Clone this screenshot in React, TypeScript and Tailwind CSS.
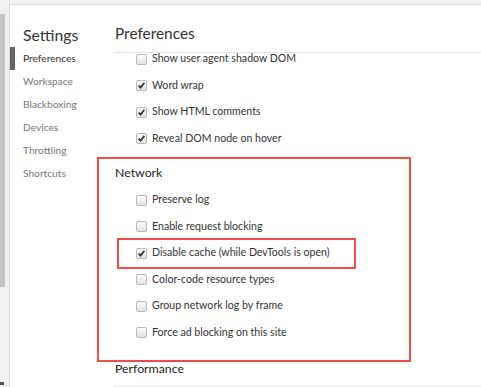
import React from "react";

const font = { fontFamily: 'Lato, "Open Sans", sans-serif' };

function Box({ checked }: { checked?: boolean }) {
  return (
    <span className="relative inline-block w-[11px] h-[11px] rounded-[2px] border border-[#b9b9b9] bg-gradient-to-b from-[#fbfbfb] to-[#e2e2e2] shrink-0">
      {checked && (
        <svg viewBox="0 0 11 11" className="absolute left-[-1px] top-[-1px] w-[11px] h-[11px]">
          <path d="M2.6 5.6 L4.6 7.6 L8.4 2.8" fill="none" stroke="#333" strokeWidth="1.7" />
        </svg>
      )}
    </span>
  );
}

function Row({ label, checked, children }: { label: string; checked?: boolean; children?: React.ReactNode }) {
  return (
    <div className="relative h-[26.5px] flex items-center pl-[21px] gap-[5px] text-[10.6px] text-[#333]">
      {children}
      <Box checked={checked} />
      <span>{label}</span>
    </div>
  );
}

const tabs = ["Preferences", "Workspace", "Blackboxing", "Devices", "Throttling", "Shortcuts"];

export default function App() {
  return (
    <div style={font} className="w-[481px] h-[387px] overflow-hidden bg-white flex">
      {/* scrollbar strip */}
      <div className="w-[10px] h-full bg-[#f0f0f0] border-r border-[#dadada] flex flex-col">
        <div className="h-[14px]" />
        <div className="w-[5px] h-[273px] bg-[#c4c4c4]" />
        <div className="flex-1" />
        <div className="w-[4px] h-[3px] mb-[2px] bg-[#555]" />
      </div>

      <div className="flex-1 flex flex-col">
        <div className="h-[5px] bg-[#f3f3f3] border-b border-[#dcdcdc]" />
        <div className="flex-1 flex">
          {/* sidebar */}
          <div className="w-[104px] flex flex-col">
            <div className="pl-[13px] h-[42px] pt-[19px] text-[15.8px] leading-[22px] text-[#333]">Settings</div>
            {tabs.map((t, i) => (
              <div key={t} className="relative h-[23px] flex items-center pl-[13px] text-[10.2px]">
                {i === 0 && <div className="absolute left-0 top-0 w-[5px] h-full bg-[#666]" />}
                <span className={i === 0 ? "text-[#333]" : "text-[#777]"}>{t}</span>
              </div>
            ))}
          </div>

          {/* content */}
          <div className="flex-1 flex flex-col">
            <div className="ml-[1px] h-[48px] border-b border-[#e6e6e6] pt-[17px] text-[15.4px] leading-[22px] text-[#333]">
              Preferences
            </div>
            <div className="ml-[1px] mt-[-7px]">
              <Row label="Show user agent shadow DOM" />
              <Row label="Word wrap" checked />
              <Row label="Show HTML comments" checked />
              <Row label="Reveal DOM node on hover" checked />
            </div>

            <div className="ml-[-17px] mt-[5px] w-[314px] border-2 border-[#f44a4a] pl-[16px] pb-[14px]">
              <div className="h-[28px] flex items-center text-[12.3px] text-[#222]">Network</div>
              <Row label="Preserve log" />
              <Row label="Enable request blocking" />
              <Row label="Disable cache (while DevTools is open)" checked>
                <div className="absolute left-[2px] top-[-2px] w-[239px] h-[31px] border-2 border-[#f44a4a]" />
              </Row>
              <Row label="Color-code resource types" />
              <Row label="Group network log by frame" />
              <Row label="Force ad blocking on this site" />
            </div>

            <div className="ml-[1px] h-[14px] flex items-center text-[12.3px] text-[#222]">Performance</div>
            <div className="mt-[10px] border-t border-[#e6e6e6]" />
          </div>
        </div>
      </div>
    </div>
  );
}
